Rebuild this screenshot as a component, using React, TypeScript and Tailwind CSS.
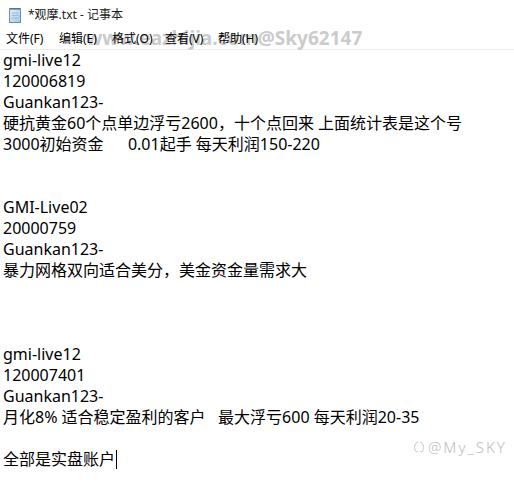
import React from 'react';

const lines: string[] = [
  'gmi-live12',
  '120006819',
  'Guankan123-',
  '硬抗黄金60个点单边浮亏2600，十个点回来 上面统计表是这个号',
  '3000初始资金\u3000\u00a0 0.01起手 每天利润150-220',
  '',
  '',
  'GMI-Live02',
  '20000759',
  'Guankan123-',
  '暴力网格双向适合美分，美金资金量需求大',
  '',
  '',
  '',
  'gmi-live12',
  '120007401',
  'Guankan123-',
  '月化8% 适合稳定盈利的客户\u00a0\u00a0 最大浮亏600 每天利润20-35',
  '',
];

const menu = ['文件(F)', '编辑(E)', '格式(O)', '查看(V)', '帮助(H)'];

function NotepadIcon() {
  return (
    <svg width="14" height="16" viewBox="0 0 14 16" className="shrink-0">
      <defs>
        <linearGradient id="pad" x1="0" y1="0" x2="1" y2="1">
          <stop offset="0" stopColor="#e8f3fb" />
          <stop offset="1" stopColor="#9fc6e4" />
        </linearGradient>
      </defs>
      <rect x="1.5" y="1.5" width="11" height="14" fill="url(#pad)" stroke="#6c8fb0" />
      <path d="M3 1v2M5 1v2M7 1v2M9 1v2M11 1v2" stroke="#556" strokeWidth="1" />
      <path d="M3.5 6h7M3.5 8.5h7M3.5 11h7" stroke="#8fb3d0" strokeWidth="0.8" />
    </svg>
  );
}

export default function App() {
  return (
    <div
      className="relative w-[514px] h-[481px] bg-white overflow-hidden text-black"
      style={{ fontFamily: '"Noto Sans", "Noto Sans CJK SC", sans-serif' }}
    >
      {/* Title bar */}
      <div className="h-[29px] flex items-center gap-[6px] pl-[8px] text-[12px] text-[#222]">
        <NotepadIcon />
        <span>*观摩.txt - 记事本</span>
      </div>

      {/* Menu bar with site watermark behind */}
      <div className="relative h-[21px] border-b border-[#ececec]">
        <span
          aria-hidden="true"
          className="absolute left-[86px] top-[-3px] text-[19px] leading-[25px] font-bold text-[#cbcbcb] whitespace-nowrap"
        >
          www.eazhijia.com@Sky62147
        </span>
        <div className="relative flex items-center h-full pl-[6px] text-[12px]">
          {menu.map((m) => (
            <span key={m} className="w-[53px] shrink-0">
              {m}
            </span>
          ))}
        </div>
      </div>

      {/* Editor */}
      <div className="pl-[3px] text-[16px] leading-[21px]">
        {lines.map((l, i) => (
          <div key={i} className="h-[21px] whitespace-pre">
            {l}
          </div>
        ))}
        <div className="h-[21px] whitespace-pre flex items-center">
          全部是实盘账户
          <span className="inline-block w-px h-[19px] bg-black ml-[1px]" />
        </div>
      </div>

      {/* Bottom-right watermark */}
      <div className="absolute left-[413px] top-[437px] flex items-center gap-[3px] text-[#bdbdbd]">
        <svg width="12" height="14" viewBox="0 0 12 14" fill="none" stroke="#c4c4c4" strokeWidth="1">
          <path d="M5 2C2 3 1 6 2 10c0.5 2 2 2.5 3 1" />
          <path d="M7 2c3 1 4 4 3 8c-0.5 2-2 2.5-3 1" />
        </svg>
        <span className="text-[15px] leading-[20px] font-light tracking-[2px]">@My_SKY</span>
      </div>
    </div>
  );
}
